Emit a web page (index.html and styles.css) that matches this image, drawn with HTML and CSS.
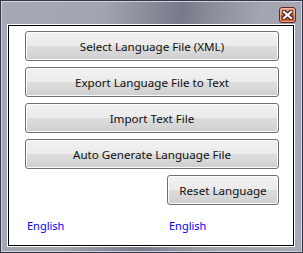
FILE: index.html
```html
<!DOCTYPE html>
<html lang="en">
<head>
    <meta charset="UTF-8">
    <title>Language</title>
    <link rel="stylesheet" href="styles.css">
</head>
<body>
    <div class="window">
        <div class="titlebar">
            <button class="close-btn" title="Close">
                <svg width="11" height="10" viewBox="0 0 11 10">
                    <path d="M2 2 L9 8 M9 2 L2 8" stroke="#4a2418" stroke-width="4.5" stroke-linecap="square"/>
                    <path d="M2 2 L9 8 M9 2 L2 8" stroke="#fff" stroke-width="2.2" stroke-linecap="square"/>
                </svg>
            </button>
        </div>
        <div class="content">
            <div class="btn-column">
                <button class="win-btn">Select Language File (XML)</button>
                <button class="win-btn">Export Language File to Text</button>
                <button class="win-btn">Import Text File</button>
                <button class="win-btn">Auto Generate Language File</button>
                <button class="win-btn reset-btn">Reset Language</button>
            </div>
            <div class="lang-row">
                <span class="lang-label">English</span>
                <span class="lang-label">English</span>
            </div>
        </div>
    </div>
</body>
</html>
```

FILE: styles.css
```css
body {
    margin: 0;
    padding: 0;
    font-family: "Segoe UI", "Noto Sans", sans-serif;
    font-size: 12px;
}

/* Window frame */
.window {
    width: 303px;
    height: 253px;
    box-sizing: border-box;
    border: 1px solid #34384a;
    padding: 0 7px 5px 6px;
    background: linear-gradient(100deg, #a7a9b4 0%, #a2a4af 30%, #888a97 44%, #787a89 53%, #8c8e9a 62%, #a3a5b0 76%, #a7a9b4 100%);
    box-shadow: inset 1px 1px 0 #cfd1d9, inset -1px -1px 0 #cfd1d9;
    display: flex;
    flex-direction: column;
}

.titlebar {
    height: 23px;
    display: flex;
    justify-content: flex-end;
    align-items: flex-start;
}

.close-btn {
    width: 17px;
    height: 16px;
    margin-top: 6px;
    margin-right: -1px;
    padding: 0;
    border: 1px solid #5a2c22;
    border-radius: 3px;
    background: linear-gradient(#e8a08a 0%, #dc7a5e 45%, #c8461f 55%, #d9643c 100%);
    box-shadow: inset 0 0 0 1px rgba(255, 210, 190, 0.55);
    display: flex;
    align-items: center;
    justify-content: center;
}

/* Client area */
.content {
    flex: 1;
    border: 1px solid #000;
    outline: 1px solid #fff;
    margin: 1px;
    background: #fff;
    padding: 5px 13px 0 16px;
}

.btn-column {
    display: flex;
    flex-direction: column;
    gap: 6px;
    width: 254px;
}

.win-btn {
    height: 30px;
    width: 254px;
    box-sizing: border-box;
    border: 1px solid #707070;
    border-radius: 3px;
    background: linear-gradient(#f2f2f2 0%, #ebebeb 50%, #dddddd 50%, #cfcfcf 100%);
    box-shadow: inset 0 0 0 1px #fcfcfc;
    font-family: "Segoe UI", "Noto Sans", sans-serif;
    font-size: 11.6px;
    color: #111;
    padding: 0;
}

.reset-btn {
    width: 112px;
    align-self: flex-end;
}

.lang-row {
    display: flex;
    margin-top: 13px;
    padding-left: 2px;
}

.lang-label {
    flex: 0 0 142px;
    font-size: 11px;
    color: #0000ff;
}
```
